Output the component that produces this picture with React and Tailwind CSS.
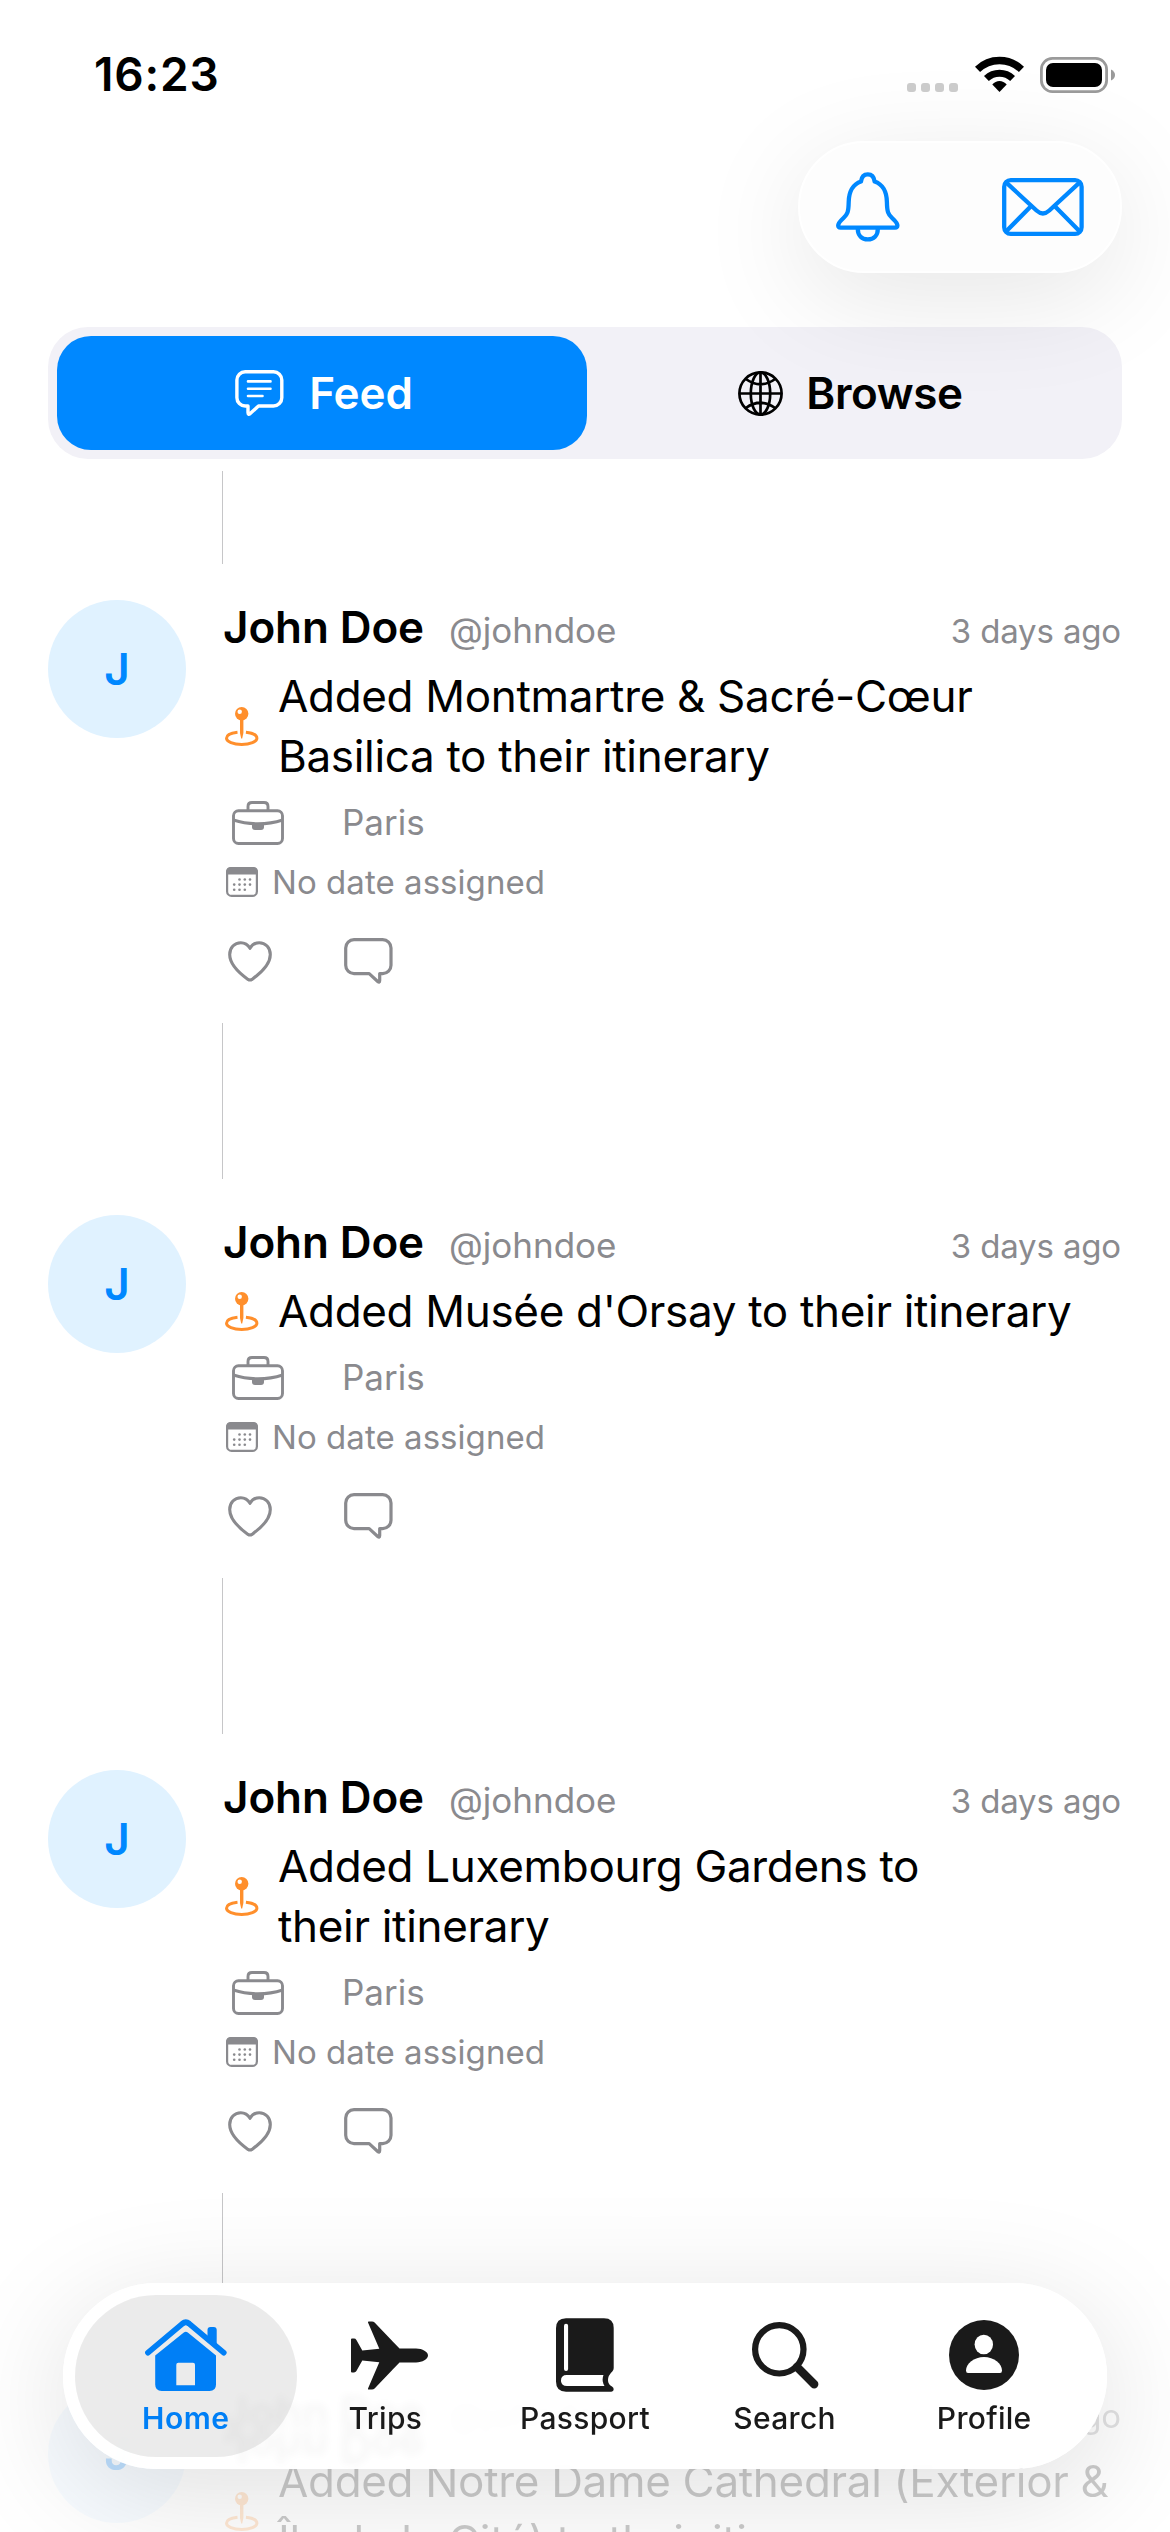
import React from "react";

const BLUE = "#0088ff";
const GRAY = "#8a8a8e";
const INK = "#1a1a1a";

function WifiIcon() {
  return (
    <svg width="49" height="36" viewBox="0 0 49 36" className="mb-px">
      <g fill="none" stroke="#000">
        <path d="M2.5 13.4A31.5 31.5 0 0 1 46.5 13.4" strokeWidth="7.4" />
        <path d="M11.4 22.5A19 19 0 0 1 37.6 22.5" strokeWidth="7" />
      </g>
      <path d="M24.5 36L17.3 28.6Q20.3 25 24.5 25T31.700 28.600Z" fill="#000" />
    </svg>
  );
}

function BatteryIcon() {
  return (
    <svg width="75" height="36" viewBox="0 0 75 36">
      <rect x="1.4" y="1.400" width="65.200" height="33.200" rx="11" fill="none" stroke="#9a9a9a" strokeWidth="2.800" />
      <rect x="6" y="6" width="56" height="24" rx="7" fill="#000" />
      <path d="M71 12.500Q75 14.500 75 18T71 23.500Z" fill="#9a9a9a" />
    </svg>
  );
}

function BellIcon() {
  return (
    <svg width="64" height="70" viewBox="0 0 64 70" fill="none" stroke={BLUE} strokeWidth="4.300" strokeLinejoin="round">
      <path d="M31.800 2.300C27.500 2.300 25.500 5.500 25 9.500C17 12 12.900 20 12.700 30C12.500 40 11.500 42.300 7.500 46C4 49.200 2.200 51.500 2.200 53.600C2.200 55 3.100 55.600 4.500 55.600H59.100C60.500 55.600 61.400 55 61.400 53.600C61.400 51.500 59.600 49.200 56.100 46C52.100 42.300 51.100 40 50.900 30C50.700 20 46.600 12 38.600 9.500C38.100 5.500 36.100 2.300 31.800 2.300Z" />
      <path d="M21.800 57C21.800 63.500 26 67.400 31.800 67.400S41.800 63.500 41.800 57" />
    </svg>
  );
}

function MailIcon() {
  return (
    <svg width="82" height="58" viewBox="0 0 82 58" fill="none" stroke={BLUE} strokeWidth="4.300">
      <rect x="2.200" y="2.200" width="77.400" height="53.600" rx="6.500" />
      <path d="M3.800 4.200L34.500 32.500Q40.900 38.300 47.300 32.500L78 4.200M29.200 28L4 53.500M52.600 28L77.800 53.500" />
    </svg>
  );
}

function FeedIcon() {
  return (
    <svg width="49" height="46" viewBox="0 0 49 46" fill="none" stroke="#fff" strokeWidth="3.400" strokeLinejoin="round" strokeLinecap="round">
      <path d="M10.200 1.800H38.500A8.300 8.300 0 0 1 46.800 10.100V27.700A8.300 8.300 0 0 1 38.500 36H23.500L15.200 43.600Q13 45.200 13 42.500V36H10.200A8.300 8.300 0 0 1 1.900 27.700V10.100A8.300 8.300 0 0 1 10.200 1.800Z" />
      <path d="M13 11.400H35.500M13 18.800H35.500M13 26H27.500" strokeWidth="2.600" />
    </svg>
  );
}

function GlobeIcon() {
  return (
    <svg width="45" height="45" viewBox="0 0 45 45" fill="none" stroke="#000" strokeWidth="2.700">
      <circle cx="22.500" cy="22.500" r="21.100" />
      <ellipse cx="22.500" cy="22.500" rx="9.700" ry="21.100" />
      <path d="M22.500 1.300V43.700M1.300 22.500H43.700M7.800 8Q22.500 18.500 37.200 8M7.800 37Q22.500 26.500 37.200 37" />
    </svg>
  );
}

function PinIcon() {
  return (
    <svg width="34" height="39" viewBox="0 0 34 39" className="mt-px shrink-0">
      <path d="M12.500 25.200C6 25.900 1.500 28.200 1.500 31.200C1.500 34.700 8.300 37.400 16.700 37.400S31.900 34.700 31.900 31.200C31.900 28.200 27.400 25.900 20.900 25.200" fill="none" stroke="#ff8f2c" strokeWidth="3" />
      <path d="M15 12H18.400V26L17.200 31.500H16.200L15 26Z" fill="#ff8f2c" />
      <circle cx="16.700" cy="6.700" r="6.700" fill="#ff8f2c" />
      <circle cx="14.700" cy="4.700" r="2.200" fill="#fff" />
    </svg>
  );
}

function BriefcaseIcon() {
  return (
    <svg width="52" height="44" viewBox="0 0 52 44" fill="none" stroke={GRAY} strokeWidth="2.900">
      <rect x="1.500" y="9.700" width="49" height="32.800" rx="5" />
      <path d="M16 9.500V5.500Q16 1.500 20 1.500H32Q36 1.500 36 5.500V9.500" />
      <path d="M1.400 19Q13 22.800 26 22.800T50.600 19" />
      <path d="M20 22.500H32V26Q32 29 29 29H23Q20 29 20 26Z" fill={GRAY} stroke="none" />
    </svg>
  );
}

const CALENDAR_DOTS = [
  [13.5, 12.5], [18.8, 12.5], [24, 12.5],
  [8.2, 17.6], [13.5, 17.6], [18.8, 17.6], [24, 17.6],
  [8.2, 22.7], [13.5, 22.7], [18.8, 22.7],
];

function CalendarIcon() {
  return (
    <svg width="32" height="30" viewBox="0 0 32 30">
      <rect x="1.100" y="1.100" width="29.800" height="27.800" rx="4.500" fill="none" stroke={GRAY} strokeWidth="2.200" />
      <path d="M0 7.500V5Q0 0 5 0H27Q32 0 32 5V7.500Z" fill={GRAY} />
      {CALENDAR_DOTS.map(([x, y]) => (
        <circle key={x + "-" + y} cx={x} cy={y} r="1.300" fill={GRAY} />
      ))}
    </svg>
  );
}

function HeartIcon() {
  return (
    <svg width="44" height="41" viewBox="0 0 44 41" fill="none" stroke={GRAY} strokeWidth="3.100" strokeLinejoin="round">
      <path d="M22 7.300C20 3.900 16.600 1.700 12.800 1.700C6.500 1.700 1.700 6.700 1.700 13.500C1.700 22.500 9 30.500 20 38.400Q22 39.700 24 38.400C35 30.500 42.300 22.500 42.300 13.500C42.300 6.700 37.500 1.700 31.200 1.700C27.400 1.700 24 3.900 22 7.300Z" />
    </svg>
  );
}

function CommentIcon() {
  return (
    <svg width="49" height="46" viewBox="0 0 49 46" fill="none" stroke={GRAY} strokeWidth="3.200" strokeLinejoin="round">
      <path d="M10 1.700H38.700A8.300 8.300 0 0 1 47 10V27.300A8.300 8.300 0 0 1 38.700 35.600H35.700V42.600Q35.700 45.200 33.700 43.500L25.200 35.600H10A8.300 8.300 0 0 1 1.700 27.300V10A8.300 8.300 0 0 1 10 1.700Z" />
    </svg>
  );
}

function HomeIcon() {
  return (
    <svg width="82" height="72" viewBox="0 0 82 72">
      <path d="M3 33.600L37.500 4.600Q40.800 2 44.100 4.600L78.700 33.600" fill="none" stroke="#007ff6" strokeWidth="5.800" strokeLinecap="round" strokeLinejoin="round" />
      <path d="M62.500 20V11Q62.500 8 65.500 8H68.700Q71.700 8 71.700 11V28Z" fill="#007ff6" />
      <path fillRule="evenodd" d="M10.200 36.500L38.800 13.500Q40.800 12 42.800 13.500L71 36.500V65.500Q71 72 64.500 72H16.700Q10.200 72 10.200 65.500ZM33.300 43.800Q31.300 43.800 31.300 45.800V66.300H50V45.800Q50 43.800 48 43.800Z" fill="#007ff6" />
    </svg>
  );
}

function PlaneIcon() {
  return (
    <svg width="77" height="69" viewBox="0 0 77 69" fill={INK} className="ml-2">
      <path d="M0 18.500Q0 17.600 1 17.600H3Q4.600 17.600 5.400 18.900L11.300 29.500L28.300 27.700L17 1.500Q16.700 .4 17.700 .4H21Q22.600 .4 23.600 1.500L48.500 27.600H65C71.500 27.600 77 31 77 34.500S71.500 41.400 65 41.400H48.500L23.600 67.500Q22.600 68.600 21 68.600H17.700Q16.700 68.600 17 67.500L28.300 41.300L11.300 39.500L5.400 50.100Q4.600 51.400 3 51.400H1Q0 51.400 0 50.500Z" />
    </svg>
  );
}

function BookIcon() {
  return (
    <svg width="58" height="74" viewBox="0 0 58 74">
      <path d="M10 .3H48Q57.700 .3 57.700 10V50Q57.700 52 56.500 53.300Q52 57.500 52 62Q52 66.500 56 68.500Q57.700 69.500 57.700 71.300Q57.700 73.700 55.300 73.700H10Q0 73.700 0 63.500V10.300Q0 .3 10 .3Z" fill={INK} />
      <rect x="8" y="5.700" width="4.100" height="47.200" rx="2" fill="#fff" />
      <path d="M11 56.900H47.500Q45.300 62.500 48.500 68H11Q5 68 5 62.400T11 56.900Z" fill="#fff" />
    </svg>
  );
}

function SearchIcon() {
  return (
    <svg width="67" height="67" viewBox="0 0 67 67" fill="none" stroke={INK} className="ml-[2px]">
      <circle cx="27.300" cy="27.300" r="24.200" strokeWidth="6.200" />
      <path d="M45 45L62.200 62.200" strokeWidth="8.400" strokeLinecap="round" />
    </svg>
  );
}

function ProfileIcon() {
  return (
    <svg width="70" height="70" viewBox="0 0 70 70">
      <circle cx="35" cy="35" r="35" fill={INK} />
      <ellipse cx="34.800" cy="24.500" rx="9.200" ry="9.800" fill="#fff" />
      <path d="M17 50.500C17 43.500 25 36.900 35 36.900S53 43.500 53 50.500Q53 53.100 51 53.100H19Q17 53.100 17 50.500Z" fill="#fff" />
    </svg>
  );
}

function StatusBar() {
  return (
    <div className="flex h-[141px] items-center justify-between pt-[7px] pr-[55px] pl-[94px]">
      <span className="text-[46px] leading-[60px] font-semibold tracking-[0.85px]">16:23</span>
      <div className="relative z-20 flex items-end">
        <div className="mr-[17px] mb-px flex gap-[5px]">
          {[0, 1, 2, 3].map((dot) => (
            <span key={dot} className="size-[9px] rounded-[3px] bg-[#cbcbcb]" />
          ))}
        </div>
        <WifiIcon />
        <div className="ml-4">
          <BatteryIcon />
        </div>
      </div>
    </div>
  );
}

function Post({ lines, faded }) {
  return (
    <article className="flex">
      <div
        className={
          "mr-9 flex size-[138px] shrink-0 items-center justify-center rounded-full bg-[#e0f2ff] text-[44px] leading-none font-semibold text-[#0088ff] " +
          (faded ? "opacity-25" : "")
        }
      >
        J
      </div>
      <div className="w-[900px] shrink-0">
        <div className="flex h-[54px] items-baseline pl-px leading-[54px]">
          <span
            className={
              "text-[44px] font-semibold tracking-[-0.1px] " +
              (faded ? "opacity-75 [-webkit-box-reflect:below_-19px]" : "")
            }
          >
            John Doe
          </span>
          <span className={"ml-[25px] text-[35px] text-[#8a8a8e] " + (faded ? "opacity-60" : "")}>@johndoe</span>
          <span className={"mr-px ml-auto text-[33px] tracking-[-0.15px] text-[#8a8a8e] " + (faded ? "opacity-25" : "")}>
            3 days ago
          </span>
        </div>
        <div className={faded ? "opacity-20" : ""}>
          <div className="mt-3 flex items-center pl-[3px]">
            <PinIcon />
            <p className="ml-[19px] text-[44px] leading-[60px] tracking-[-0.32px]">
              {lines.map((line) => (
                <span key={line} className="block whitespace-nowrap">
                  {line}
                </span>
              ))}
            </p>
          </div>
          <div className="mt-[9px] flex h-14 items-center pl-[10px] text-[#8a8a8e]">
            <BriefcaseIcon />
            <span className="mb-[2px] ml-[58px] text-[35px] leading-[54px]">Paris</span>
          </div>
          <div className="mt-[10px] flex h-[42px] items-center pl-1 text-[#8a8a8e]">
            <CalendarIcon />
            <span className="ml-[14px] text-[33px] leading-[42px] tracking-[0.05px]">No date assigned</span>
          </div>
          <div className="mt-[35px] flex h-[46px] items-center pl-[6px]">
            <HeartIcon />
            <div className="ml-[72px]">
              <CommentIcon />
            </div>
          </div>
        </div>
        <div className="mt-[39px] mb-9 h-[156px] w-px bg-[#c6c6c8]" />
      </div>
    </article>
  );
}

const POSTS = [
  ["Added Montmartre & Sacré-Cœur", "Basilica to their itinerary"],
  ["Added Musée d'Orsay to their itinerary"],
  ["Added Luxembourg Gardens to", "their itinerary"],
  ["Added Notre Dame Cathedral (Exterior &", "Île de la Cité) to their itinerary"],
];

const TABS = [
  { label: "Home", Icon: HomeIcon, active: true },
  { label: "Trips", Icon: PlaneIcon },
  { label: "Passport", Icon: BookIcon },
  { label: "Search", Icon: SearchIcon },
  { label: "Profile", Icon: ProfileIcon },
];

function TabBar() {
  return (
    <nav className="absolute bottom-[63px] left-[63px] z-20 grid h-[186px] w-[1044px] grid-cols-5 rounded-full bg-white/95 px-[23px] py-3 shadow-[0_24px_120px_rgba(0,0,0,0.13)] backdrop-blur-[4px]">
      {TABS.map(({ label, Icon, active }) => (
        <div
          key={label}
          className={
            "-mx-[11px] flex h-[162px] flex-col items-center rounded-full pt-6 " +
            (active ? "bg-black/[0.08] text-[#007ff6]" : "text-[#1a1a1a]")
          }
        >
          <div className="flex h-[72px] items-center justify-center">
            <Icon />
          </div>
          <span
            className={
              "mt-3 text-[30px] leading-[30px] " +
              (active ? "font-semibold tracking-[0.5px]" : "font-medium tracking-[0.3px]")
            }
          >
            {label}
          </span>
        </div>
      ))}
    </nav>
  );
}

export default function App() {
  return (
    <div className="relative h-[2532px] w-[1170px] overflow-hidden bg-white font-['Inter',sans-serif] text-black">
      <StatusBar />
      <div className="flex justify-end pr-12">
        <div className="relative z-10 flex h-[132px] w-[324px] items-center justify-between rounded-full border-2 border-white bg-[#fdfdfd] px-9 shadow-[0_24px_110px_rgba(0,0,0,0.10)]">
          <BellIcon />
          <MailIcon />
        </div>
      </div>
      <div className="mx-12 mt-[54px] grid h-[132px] grid-cols-2 rounded-[40px] bg-[#f2f1f7] p-[9px] text-[44px] leading-[60px] font-semibold">
        <div className="mr-[-2px] flex items-center justify-center gap-[25px] rounded-[34px] bg-[#0088ff] pl-1 text-white">
          <FeedIcon />
          <span className="tracking-[-0.06px]">Feed</span>
        </div>
        <div className="flex items-center justify-center gap-[23px] pl-[3px]">
          <GlobeIcon />
          <span className="tracking-[-0.4px]">Browse</span>
        </div>
      </div>
      <main className="mt-3 px-12">
        <div className="mb-9 ml-[174px] h-[93px] w-px bg-[#c6c6c8]" />
        {POSTS.map((lines, i) => (
          <Post key={lines[0]} lines={lines} faded={i === POSTS.length - 1} />
        ))}
      </main>
      <TabBar />
    </div>
  );
}
